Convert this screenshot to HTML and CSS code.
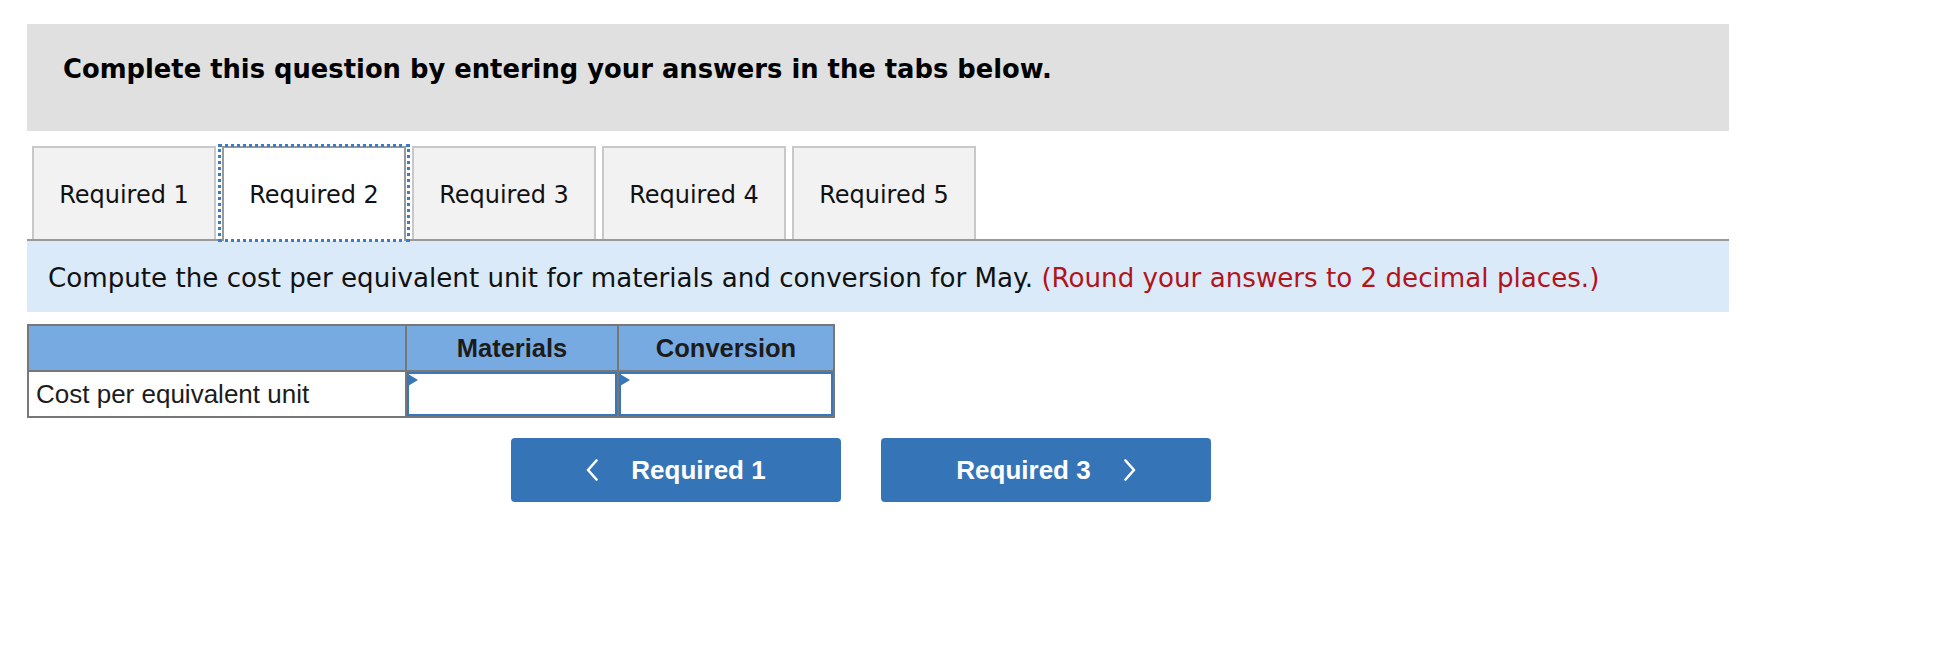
FILE: index.html
```html
<!DOCTYPE html>
<html lang="en">
<head>
<meta charset="utf-8">
<title>Required 2</title>
<link rel="stylesheet" href="styles.css">
</head>
<body>
<div class="page">
  <div class="header">Complete this question by entering your answers in the tabs below.</div>
  <div class="tabs">
    <div class="tab">Required 1</div>
    <div class="tab active">Required 2</div>
    <div class="tab">Required 3</div>
    <div class="tab">Required 4</div>
    <div class="tab">Required 5</div>
  </div>
  <div class="instr">Compute the cost per equivalent unit for materials and conversion for May. <span class="red">(Round your answers to 2 decimal places.)</span></div>
  <div class="grid">
    <div class="cell head"></div>
    <div class="cell head center">Materials</div>
    <div class="cell head center">Conversion</div>
    <div class="cell label">Cost per equivalent unit</div>
    <div class="cell inp"><input class="field" type="text" aria-label="Materials"></div>
    <div class="cell inp"><input class="field" type="text" aria-label="Conversion"></div>
  </div>
  <div class="nav">
    <div class="btn">
      <svg class="chev" width="12" height="22" viewBox="0 0 12 22"><polyline points="10.5,1.5 2,11 10.5,20.5" fill="none" stroke="#fff" stroke-width="2.6" stroke-linecap="round" stroke-linejoin="round"/></svg>
      <span>Required 1</span>
    </div>
    <div class="btn">
      <span>Required 3</span>
      <svg class="chev" width="12" height="22" viewBox="0 0 12 22"><polyline points="1.5,1.5 10,11 1.5,20.5" fill="none" stroke="#fff" stroke-width="2.6" stroke-linecap="round" stroke-linejoin="round"/></svg>
    </div>
  </div>
</div>
</body>
</html>
```
FILE: styles.css
```css
html, body {
  margin: 0;
  padding: 0;
  background: #fff;
}
.page {
  padding: 24px 0 0 27px;
  width: 1702px;
}
.header {
  box-sizing: border-box;
  height: 107px;
  background: #e0e0e0;
  padding: 30px 0 0 36px;
  font-family: "DejaVu Sans", Verdana, sans-serif;
  font-weight: bold;
  font-size: 25.8px;
  color: #000;
}
.tabs {
  display: flex;
  gap: 6px;
  margin-top: 15px;
  padding-left: 5px;
  border-bottom: 2px solid #999;
  height: 93px;
}
.tab {
  position: relative;
  box-sizing: border-box;
  width: 184px;
  height: 93px;
  border: 2px solid #c8c8c8;
  border-bottom: 0;
  background: #f2f2f2;
  display: flex;
  align-items: center;
  justify-content: center;
  padding-top: 3px;
  font-family: "DejaVu Sans", Verdana, sans-serif;
  font-size: 24px;
  color: #111;
}
.tab.active {
  background: #fff;
  border-color: #999;
  height: 95px;
  padding-top: 1px;
  z-index: 1;
}
.tab.active::after {
  content: "";
  position: absolute;
  left: -6px;
  right: -6px;
  top: -4px;
  bottom: -1px;
  border: 3px dotted #3b7cc6;
}
.instr {
  box-sizing: border-box;
  height: 71px;
  background: #dbeaf8;
  padding: 22px 0 0 21px;
  font-family: "DejaVu Sans", Verdana, sans-serif;
  font-size: 26.15px;
  color: #111;
  white-space: nowrap;
}
.red {
  color: #b3131b;
}
.grid {
  display: grid;
  grid-template-columns: 376px 210px 214px;
  grid-template-rows: 44px 44px;
  gap: 2px;
  padding: 2px;
  background: #777;
  width: max-content;
  margin-top: 12px;
  font-family: "Liberation Sans", Arial, sans-serif;
  color: #1c1c1c;
}
.cell {
  background: #fff;
  display: flex;
  align-items: center;
  position: relative;
}
.cell.head {
  background: #77aae0;
  font-weight: bold;
  font-size: 25.5px;
}
.cell.center {
  justify-content: center;
}
.cell.label {
  padding-left: 7px;
  font-size: 26px;
}
.cell.inp {
  align-items: stretch;
}
.field {
  box-sizing: border-box;
  width: 100%;
  height: 100%;
  margin: 0;
  border: 2px solid #3877ba;
  background: #fff;
  outline: none;
  padding: 0;
}
.cell.inp::before {
  content: "";
  position: absolute;
  left: 1px;
  top: 2px;
  width: 0;
  height: 0;
  border-left: 10px solid #3877ba;
  border-top: 6.5px solid transparent;
  border-bottom: 6.5px solid transparent;
}
.nav {
  display: flex;
  gap: 40px;
  margin-top: 20px;
  padding-left: 484px;
}
.btn {
  box-sizing: border-box;
  width: 330px;
  height: 64px;
  border-radius: 4px;
  background: #3575b7;
  display: flex;
  align-items: center;
  justify-content: center;
  gap: 33px;
  font-family: "Liberation Sans", Arial, sans-serif;
  font-weight: bold;
  font-size: 26px;
  color: #fff;
}
.chev {
  display: block;
}
```
